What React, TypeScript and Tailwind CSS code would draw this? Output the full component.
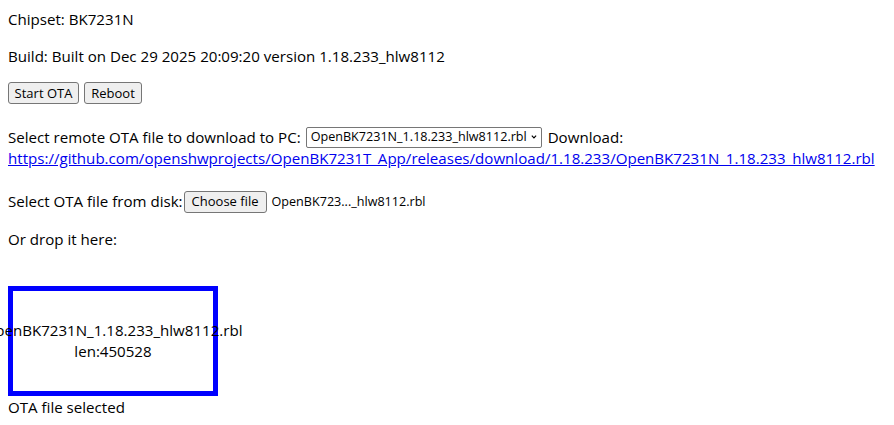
import React from 'react';

const Btn = ({ children, className = '' }: { children: React.ReactNode; className?: string }) => (
  <button className={`inline-flex items-center justify-center h-[22px] bg-[#efefef] border border-[#767676] rounded-[3px] text-[13px] text-black leading-none ${className}`}>
    {children}
  </button>
);

export default function App() {
  const file = 'OpenBK7231N_1.18.233_hlw8112.rbl';
  const url = 'https://github.com/openshwprojects/OpenBK7231T_App/releases/download/1.18.233/' + file;

  return (
    <div className="min-h-screen bg-white text-black font-['Open_Sans',sans-serif] text-[15.1px] leading-[21px] px-2 pt-[9px] whitespace-nowrap">
      <div>Chipset: BK7231N</div>

      <div className="mt-4">Build: Built on Dec 29 2025 20:09:20 version 1.18.233_hlw8112</div>

      <div className="mt-[15px] flex gap-[5px]">
        <Btn className="w-[71px]">Start OTA</Btn>
        <Btn className="w-[58px]">Reboot</Btn>
      </div>

      {/* remote file */}
      <div className="mt-[22px] flex items-center h-[22px]">
        <span>Select remote OTA file to download to PC:</span>
        <div className="ml-[5px] w-[236px] h-[21px] border border-[#767676] rounded-[2px] flex items-center pl-[4px] pr-[4px] text-[12.6px] leading-none">
          <span className="flex-1">{file}</span>
          <svg width="11" height="8" viewBox="0 0 11 8" className="ml-1">
            <polyline points="1.5,1.5 5.5,5.5 9.5,1.5" fill="none" stroke="#000" strokeWidth="2.2" />
          </svg>
        </div>
        <span className="ml-[6px]">Download:</span>
      </div>
      <a href={url} className="block text-[#0000ee] underline">{url}</a>

      {/* local file */}
      <div className="mt-[22px] flex items-center h-[21px]">
        <span>Select OTA file from disk:</span>
        <Btn className="ml-[1px] w-[83px] h-[21px] text-[13.5px]">Choose file</Btn>
        <span className="ml-[5px] text-[12.6px]">OpenBK723..._hlw8112.rbl</span>
      </div>

      <div className="mt-[17px]">Or drop it here:</div>

      {/* drop zone */}
      <div className="mt-[36px] w-[210px] h-[110px] border-[5px] border-[#0000ff] flex flex-col items-center justify-center text-center overflow-visible">
        <div>{file}</div>
        <div>len:450528</div>
      </div>

      <div className="mt-px">OTA file selected</div>
    </div>
  );
}
